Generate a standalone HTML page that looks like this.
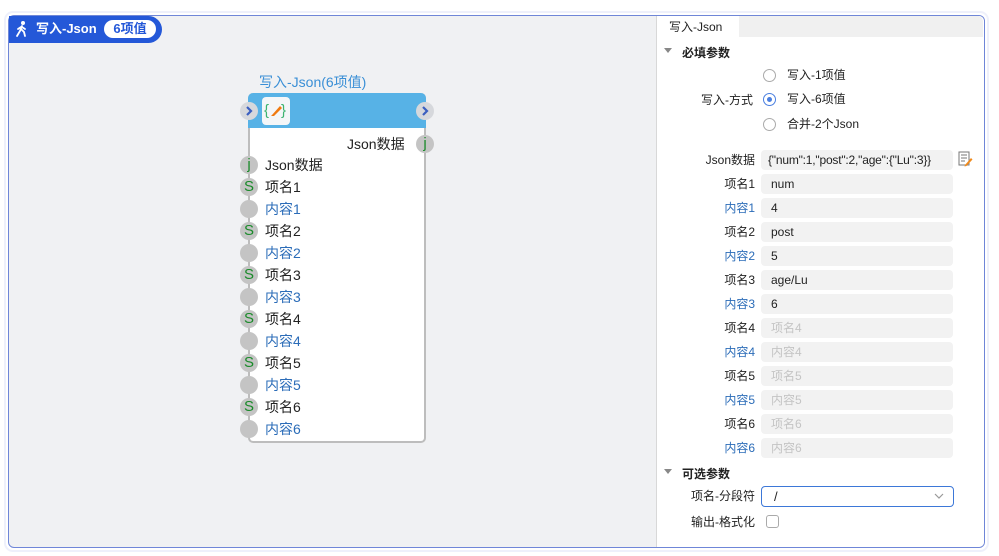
<!DOCTYPE html>
<html><head><meta charset="utf-8"><style>
*{margin:0;padding:0;box-sizing:border-box}
body{width:999px;height:556px;background:#fff;font-family:"Liberation Sans","Noto Sans CJK SC",sans-serif;position:relative;overflow:hidden;font-size:12px;color:#222}
.a{position:absolute;white-space:nowrap}
.frame{left:8px;top:15px;width:977px;height:533px;border:1.5px solid #6f86d8;border-radius:6px;background:#f0f1f3;overflow:hidden}
.halo{left:4px;top:11px;width:985px;height:541px;border:2px solid #eef0fb;border-radius:9px}
.row{position:absolute;height:22px;font-size:14px;line-height:22px;white-space:nowrap}
.dot{position:absolute;width:18px;height:18px;border-radius:50%;background:#c4c4c4;color:#1a8a2a;font-size:15px;text-align:center;line-height:18px}
.lbl{position:absolute;width:80px;text-align:right;font-size:12px;line-height:20px;white-space:nowrap}
.inp{position:absolute;left:761px;width:192px;height:20px;background:#f2f2f2;border-radius:4px;padding-left:10px;font-size:12px;line-height:20px;color:#222;white-space:nowrap}
.ph{color:#c4c4c4}
.blue{color:#2b6cb8}
.radio{position:absolute;left:763px;width:13px;height:13px;border:1px solid #aaa;border-radius:50%;background:#fff}
</style></head><body>
<div class="a halo"></div>
<div class="a frame"></div>
<div class="a" style="left:9px;top:16px;width:153px;height:27px;background:#2458d8;border-radius:0 14px 14px 0"></div>
<svg class="a" style="left:14px;top:20px" width="16" height="18" viewBox="0 0 16 18"><circle cx="9" cy="3" r="2" fill="#fff"/><path d="M8 6 L6 11 L3 16 M7 9 L10 12 L11 16 M7 7 L4 9 M8 7 L11 9" stroke="#fff" stroke-width="1.8" fill="none" stroke-linecap="round"/></svg>
<div class="a" style="left:36px;top:20px;color:#fff;font-size:13px;font-weight:bold;line-height:18px">写入-Json</div>
<div class="a" style="left:104px;top:20px;width:52px;height:18px;background:#fff;border-radius:9px;color:#2458d8;font-size:13px;font-weight:bold;text-align:center;line-height:18px">6项值</div>
<div class="a" style="left:656px;top:16px;width:328px;height:531px;background:#fff;border-left:1px solid #d8d8d8;border-radius:0 5px 5px 0"></div>
<div class="a" style="left:739px;top:16px;width:244px;height:21px;background:#f0f0f0;border-radius:0 5px 0 0"></div>
<div class="a" style="left:669px;top:19px;font-size:12px;line-height:16px">写入-Json</div>
<div class="a" style="left:664px;top:48px;width:0;height:0;border-left:4px solid transparent;border-right:4px solid transparent;border-top:5px solid #888"></div>
<div class="a" style="left:682px;top:44px;font-weight:bold;font-size:12px">必填参数</div>
<div class="a" style="left:664px;top:469px;width:0;height:0;border-left:4px solid transparent;border-right:4px solid transparent;border-top:5px solid #888"></div>
<div class="a" style="left:682px;top:465px;font-weight:bold;font-size:12px">可选参数</div>
<div class="radio" style="top:69px"></div><div class="a" style="left:787px;top:67px;line-height:16px">写入-1项值</div>
<div class="radio" style="top:93px;border-color:#4a7fe0"><div style="position:absolute;left:3px;top:3px;width:5px;height:5px;border-radius:50%;background:#4a7fe0"></div></div><div class="a" style="left:787px;top:91px;line-height:16px">写入-6项值</div>
<div class="radio" style="top:118px"></div><div class="a" style="left:787px;top:116px;line-height:16px">合并-2个Json</div>
<div class="lbl" style="left:673px;top:90px">写入-方式</div>
<div class="lbl" style="left:675px;top:150px">Json数据</div>
<div class="inp" style="top:150px;padding-left:7px;letter-spacing:-0.2px">{"num":1,"post":2,"age":{"Lu":3}}</div>
<svg class="a" style="left:958px;top:151px" width="15" height="16" viewBox="0 0 15 16"><rect x="1" y="1" width="10" height="13" fill="#fff" stroke="#777"/><path d="M3 4h6M3 7h6M3 10h4" stroke="#777"/><path d="M7 14 L13 7 L14.5 8.5 L8.5 15 L6.5 15.5Z" fill="#f08a1c"/></svg>
<div class="lbl" style="left:675px;top:174px">项名1</div><div class="inp" style="top:174px">num</div>
<div class="lbl blue" style="left:675px;top:198px">内容1</div><div class="inp" style="top:198px">4</div>
<div class="lbl" style="left:675px;top:222px">项名2</div><div class="inp" style="top:222px">post</div>
<div class="lbl blue" style="left:675px;top:246px">内容2</div><div class="inp" style="top:246px">5</div>
<div class="lbl" style="left:675px;top:270px">项名3</div><div class="inp" style="top:270px">age/Lu</div>
<div class="lbl blue" style="left:675px;top:294px">内容3</div><div class="inp" style="top:294px">6</div>
<div class="lbl" style="left:675px;top:318px">项名4</div><div class="inp ph" style="top:318px">项名4</div>
<div class="lbl blue" style="left:675px;top:342px">内容4</div><div class="inp ph" style="top:342px">内容4</div>
<div class="lbl" style="left:675px;top:366px">项名5</div><div class="inp ph" style="top:366px">项名5</div>
<div class="lbl blue" style="left:675px;top:390px">内容5</div><div class="inp ph" style="top:390px">内容5</div>
<div class="lbl" style="left:675px;top:414px">项名6</div><div class="inp ph" style="top:414px">项名6</div>
<div class="lbl blue" style="left:675px;top:438px">内容6</div><div class="inp ph" style="top:438px">内容6</div>
<div class="lbl" style="left:675px;top:486px">项名-分段符</div>
<div class="a" style="left:761px;top:486px;width:193px;height:21px;border:1px solid #3d78d8;border-radius:4px;padding-left:12px;line-height:19px;font-size:13px">/</div>
<svg class="a" style="left:934px;top:492px" width="10" height="8"><path d="M1 2 L5 6 L9 2" stroke="#999" fill="none" stroke-width="1.2"/></svg>
<div class="lbl" style="left:675px;top:512px">输出-格式化</div>
<div class="a" style="left:766px;top:515px;width:13px;height:13px;border:1px solid #aaa;border-radius:3px;background:#fff"></div>
<!-- node -->
<div class="a" style="left:259px;top:73px;color:#3a8fd6;font-size:14px;line-height:18px">写入-Json(6项值)</div>
<div class="a" style="left:248px;top:93px;width:178px;height:350px;background:#fff;border:2px solid #bdbdbd;border-top:none;border-radius:5px"></div>
<div class="a" style="left:248px;top:93px;width:178px;height:35px;background:#57b2e6;border-radius:5px 5px 0 0"></div>
<div class="a" style="left:262px;top:97px;width:28px;height:28px;background:#f4f6f8;border-radius:4px;font-size:15px;color:#3cb371;line-height:27px;padding-left:2px">{<span style="display:inline-block;width:12px"></span>}</div>
<svg class="a" style="left:269px;top:103px" width="14" height="14"><path d="M3 12 L11 3 L13 5 L5 13 L2 13Z" fill="#f07a10"/></svg>
<div class="dot" style="left:240px;top:102px;background:#d6d8dc"></div>
<svg class="a" style="left:240px;top:102px" width="18" height="18"><path d="M7 5 L11 9 L7 13" stroke="#3b5fc0" stroke-width="2.2" fill="none"/></svg>
<div class="dot" style="left:416px;top:102px;background:#d6d8dc"></div>
<svg class="a" style="left:416px;top:102px" width="18" height="18"><path d="M7 5 L11 9 L7 13" stroke="#3b5fc0" stroke-width="2.2" fill="none"/></svg>
<div class="a" style="left:347px;top:133px;font-size:14px;line-height:22px">Json数据</div>
<div class="dot" style="left:416px;top:135px">j</div>
<div class="a" style="left:240px;top:146px;width:180px;height:300px">
<div class="dot" style="left:0;top:10px">j</div><div class="row" style="left:25px;top:8px">Json数据</div>
<div class="dot" style="left:0;top:32px">S</div><div class="row" style="left:25px;top:30px">项名1</div>
<div class="dot" style="left:0;top:54px"></div><div class="row blue" style="left:25px;top:52px">内容1</div>
<div class="dot" style="left:0;top:76px">S</div><div class="row" style="left:25px;top:74px">项名2</div>
<div class="dot" style="left:0;top:98px"></div><div class="row blue" style="left:25px;top:96px">内容2</div>
<div class="dot" style="left:0;top:120px">S</div><div class="row" style="left:25px;top:118px">项名3</div>
<div class="dot" style="left:0;top:142px"></div><div class="row blue" style="left:25px;top:140px">内容3</div>
<div class="dot" style="left:0;top:164px">S</div><div class="row" style="left:25px;top:162px">项名4</div>
<div class="dot" style="left:0;top:186px"></div><div class="row blue" style="left:25px;top:184px">内容4</div>
<div class="dot" style="left:0;top:208px">S</div><div class="row" style="left:25px;top:206px">项名5</div>
<div class="dot" style="left:0;top:230px"></div><div class="row blue" style="left:25px;top:228px">内容5</div>
<div class="dot" style="left:0;top:252px">S</div><div class="row" style="left:25px;top:250px">项名6</div>
<div class="dot" style="left:0;top:274px"></div><div class="row blue" style="left:25px;top:272px">内容6</div>
</div>
</body></html>
